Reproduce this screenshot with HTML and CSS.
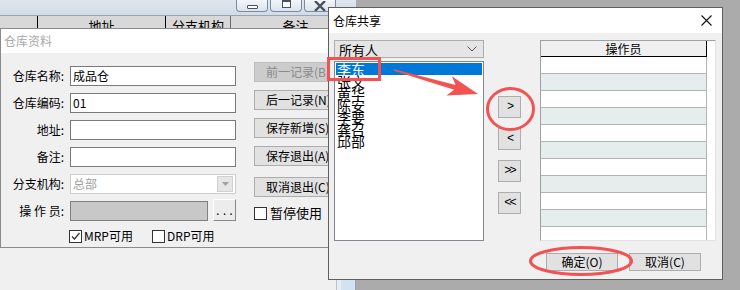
FILE: index.html
```html
<!DOCTYPE html>
<html lang="zh-CN">
<head>
    <meta charset="UTF-8">
    <title>仓库共享</title>
    <link rel="stylesheet" href="styles.css">
</head>
<body>
<div class="desktop">
    <!-- main window behind -->
    <div class="main-window">
        <div class="main-title">
            <span class="win-btn"><i class="ic-min"></i></span>
            <span class="win-btn"><i class="ic-max"></i></span>
            <span class="win-btn">
                <svg width="12" height="10" viewBox="0 0 12 10"><path d="M1 0 L11 10 M11 0 L1 10" stroke="#4a5260" stroke-width="2.4"/></svg>
            </span>
        </div>
        <div class="main-content">
            <div class="main-client">
                <div class="grid-head">
                    <span></span>
                    <span class="gh-cell">地址</span>
                    <span class="gh-cell">分支机构</span>
                    <span class="gh-cell gh-last">备注</span>
                </div>
                <div class="grid-body">
                    <div class="grid-tail">
                        <span></span><span class="gt-dark"></span><span class="gt-dark"></span><span class="gt-light"></span>
                    </div>
                </div>
                <div class="hscroll">
                    <svg width="8" height="9" viewBox="0 0 8 9"><path d="M1.5 0.5 L6 4.5 L1.5 8.5" fill="none" stroke="#606060" stroke-width="2"/></svg>
                </div>
                <div class="toolbar">
                    <span class="tb-check"></span>
                    <span class="tb-text">打印预览</span>
                    <span class="tb-text tb-label">打印</span>
                    <span class="tb-select">标准模式</span>
                </div>
            </div>
            <div class="main-frame"></div>
        </div>
    </div>

    <!-- 仓库资料 -->
    <div class="dlg dlg-info">
        <div class="info-title">仓库资料</div>
        <div class="info-body">
            <div class="form">
                <label class="lbl">仓库名称:</label>
                <div class="input">成品仓</div>
                <label class="lbl">仓库编码:</label>
                <div class="input">01</div>
                <label class="lbl">地址:</label>
                <div class="input"></div>
                <label class="lbl">备注:</label>
                <div class="input"></div>
                <label class="lbl">分支机构:</label>
                <div class="input input-off">
                    <span>总部</span>
                    <span class="drop-btn">
                        <svg width="7" height="4" viewBox="0 0 7 4"><path d="M0 0 H7 L3.5 4 Z" fill="#a0a0a0"/></svg>
                    </span>
                </div>
                <label class="lbl">操 作 员:</label>
                <div class="op-row">
                    <div class="input input-grey"></div>
                    <span class="dots-btn">...</span>
                </div>
                <span></span>
                <div class="check-row">
                    <span class="check-item">
                        <span class="box">
                            <svg width="11" height="11" viewBox="0 0 11 11"><path d="M2 5.5 L4.5 8 L9.5 2" fill="none" stroke="#333" stroke-width="1.2"/></svg>
                        </span>MRP可用
                    </span>
                    <span class="check-item"><span class="box"></span>DRP可用</span>
                </div>
            </div>
            <div class="side">
                <span class="btn btn-off">前一记录(B)</span>
                <span class="btn">后一记录(N)</span>
                <span class="btn">保存新增(S)</span>
                <span class="btn">保存退出(A)</span>
                <span class="btn btn-last">取消退出(C)</span>
                <span class="check-item side-check"><span class="box"></span>暂停使用</span>
            </div>
        </div>
    </div>

    <!-- 仓库共享 -->
    <div class="dlg dlg-share">
        <div class="share-title">
            <span>仓库共享</span>
            <svg class="close-x" width="11" height="11" viewBox="0 0 11 11"><path d="M0.5 0.5 L10.5 10.5 M10.5 0.5 L0.5 10.5" stroke="#111" stroke-width="1.1"/></svg>
        </div>
        <div class="share-body">
            <div class="share-main">
                <div class="left-col">
                    <div class="select">
                        <span>所有人</span>
                        <svg width="10" height="6" viewBox="0 0 10 6"><path d="M0.5 0.5 L5 5 L9.5 0.5" fill="none" stroke="#555" stroke-width="1"/></svg>
                    </div>
                    <ul class="list">
                        <li class="selected">李东</li>
                        <li>张文</li>
                        <li>黄华</li>
                        <li>陈安</li>
                        <li>李要</li>
                        <li>龚召</li>
                        <li>邱部</li>
                    </ul>
                </div>
                <div class="mid-col">
                    <span class="mv-btn">&gt;</span>
                    <span class="mv-btn">&lt;</span>
                    <span class="mv-btn">&gt;&gt;</span>
                    <span class="mv-btn">&lt;&lt;</span>
                </div>
                <div class="right-grid">
                    <div class="grid-table">
                        <div class="gt-head">操作员</div>
                        <div class="gt-row"></div>
                        <div class="gt-row"></div>
                        <div class="gt-row"></div>
                        <div class="gt-row"></div>
                        <div class="gt-row"></div>
                        <div class="gt-row"></div>
                        <div class="gt-row"></div>
                        <div class="gt-row"></div>
                        <div class="gt-row"></div>
                        <div class="gt-row"></div>
                        <div class="gt-row"></div>
                    </div>
                </div>
            </div>
            <div class="share-foot">
                <span class="btn btn-foot">确定(O)</span>
                <span class="btn btn-foot">取消(C)</span>
            </div>
        </div>
    </div>

    <!-- red annotations -->
    <svg class="marks" width="740" height="290" viewBox="0 0 740 290">
        <rect x="328.5" y="58.5" width="51" height="21" fill="none" stroke="#f25252" stroke-width="3"/>
        <polygon points="394.2,69.2 455.6,85 451.9,76.2 478,94 446.4,95.4 454.2,89.8 393.8,70.8" fill="#f25252"/>
        <ellipse cx="510.5" cy="109" rx="23" ry="20.5" fill="none" stroke="#f25252" stroke-width="3"/>
        <ellipse cx="581" cy="261" rx="50.5" ry="13.5" fill="none" stroke="#f25252" stroke-width="3"/>
    </svg>
</div>
</body>
</html>
```

FILE: styles.css
```css
* {
    box-sizing: border-box;
}
body {
    margin: 0;
    width: 740px;
    height: 290px;
    overflow: hidden;
    background: #ababab;
    font-family: "Noto Sans CJK SC", "Liberation Sans", sans-serif;
    font-size: 12px;
    color: #000;
}
.desktop {
    position: relative;
    width: 740px;
    height: 290px;
}

/* main window */
.main-window {
    position: absolute;
    left: 0;
    top: 0;
    width: 356px;
    height: 290px;
    display: flex;
    flex-direction: column;
    background: #f0f0f0;
}
.main-title {
    height: 16px;
    flex: none;
    display: flex;
    justify-content: flex-end;
    gap: 2px;
    padding-right: 20px;
    background: linear-gradient(#dfe6ef, #d2dbe6);
    border-bottom: 1px solid #9aa5b3;
}
.win-btn {
    width: 32px;
    height: 12px;
    display: flex;
    align-items: center;
    justify-content: center;
    border: 1px solid #7c8ba0;
    border-top: none;
    border-radius: 0 0 4px 4px;
    background: linear-gradient(#f3f6fa, #dbe3ed);
    overflow: hidden;
}
.ic-min {
    width: 11px;
    height: 4px;
    border: 1px solid #4a5260;
    border-radius: 1px;
    background: #fff;
    margin-top: 2px;
}
.ic-max {
    width: 9px;
    height: 8px;
    border: 1px solid #4a5260;
    border-top-width: 2px;
    background: #fff;
    margin-top: -3px;
}
.main-content {
    flex: 1;
    display: flex;
}
.main-client {
    width: 336px;
    display: flex;
    flex-direction: column;
}
.main-frame {
    flex: 1;
    background: #d4e1ef;
    border-left: 1px solid #b9c3cf;
    border-right: 1px solid #95a6ba;
    box-shadow: inset 4px 0 0 #e6edf5;
}
.grid-head {
    height: 12px;
    flex: none;
    display: grid;
    grid-template-columns: 37px 128px 65px 1fr;
    background: #d8d8d8;
    overflow: hidden;
    font-size: 13px;
    line-height: 16px;
}
.gh-cell {
    border-left: 1px solid #000;
    text-align: center;
    padding-top: 2px;
}
.gh-last {
    border-left-color: #6a6a6a;
    padding-left: 24px;
}
.grid-body {
    flex: 1;
    display: flex;
    flex-direction: column;
    justify-content: flex-end;
    background: #fff;
}
.grid-tail {
    height: 10px;
    display: grid;
    grid-template-columns: 37px 128px 65px 1fr;
    background: linear-gradient(#c8c8c8 0 1px, #fff 1px 5px, #d4dada 5px 6px, #fff 6px 7px, #b8b8b8 7px 8px, #fff 8px 9px, #9c9c9c 9px 10px);
    margin-right: 10px;
}
.gt-dark {
    border-left: 1px solid #000;
}
.gt-light {
    border-left: 1px solid #c4c4c4;
}
.hscroll {
    height: 18px;
    flex: none;
    display: flex;
    align-items: center;
    justify-content: flex-end;
    padding-right: 22px;
    padding-top: 1px;
}
.toolbar {
    flex: 1;
    display: flex;
    align-items: flex-start;
    border-top: 1px solid #a0a0a0;
    padding-top: 8px;
    font-size: 12px;
    line-height: 14px;
}
.tb-check {
    width: 13px;
    height: 13px;
    border: 1px solid #333;
    background: #fff;
    margin-left: 85px;
}
.tb-text {
    margin-left: 5px;
}
.tb-label {
    margin-left: 28px;
}
.tb-select {
    width: 110px;
    height: 16px;
    margin-left: 22px;
    margin-top: -2px;
    border: 1px solid #7a7a7a;
    background: #fff;
    padding-left: 3px;
}

/* dialogs */
.dlg {
    position: absolute;
    overflow: hidden;
}
.dlg-info {
    left: 0;
    top: 28px;
    width: 345px;
    height: 220px;
    border: 1px solid #8a8a8a;
    background: #f0f0f0;
}
.info-title {
    height: 24px;
    background: #fff;
    color: #a8a8a8;
    padding-left: 3px;
    line-height: 24px;
    font-size: 12px;
}
.info-body {
    display: flex;
    padding-top: 13px;
}
.form {
    display: grid;
    grid-template-columns: 63px 166px;
    grid-auto-rows: 20px;
    column-gap: 6px;
    row-gap: 7px;
}
.lbl {
    text-align: right;
    line-height: 20px;
    white-space: pre;
}
.input {
    height: 20px;
    border: 1px solid #7a7a7a;
    background: #fff;
    padding: 0 2px;
    line-height: 18px;
}
.input-off {
    display: flex;
    justify-content: space-between;
    align-items: center;
    border-color: #cdcdcd;
    color: #a0a0a0;
    padding-right: 2px;
}
.drop-btn {
    width: 16px;
    height: 16px;
    display: flex;
    align-items: center;
    justify-content: center;
    background: #e6e6e6;
    border: 1px solid #d0d0d0;
}
.op-row {
    display: flex;
    gap: 5px;
}
.input-grey {
    width: 138px;
    background: #c8c8c8;
    border-color: #808080;
}
.dots-btn {
    width: 23px;
    height: 22px;
    margin-top: -2px;
    border: 1px solid;
    border-color: #fff #888 #888 #fff;
    background: #ececec;
    text-align: center;
    line-height: 24px;
    font-family: "Liberation Mono", monospace;
    font-size: 11px;
}
.check-row {
    display: flex;
    padding-top: 1px;
}
.check-item {
    width: 100px;
    display: flex;
    align-items: center;
    gap: 2px;
    line-height: 14px;
    height: 14px;
    margin-left: -1px;
}
.box {
    width: 13px;
    height: 13px;
    flex: none;
    border: 1px solid #333;
    background: #fff;
    display: flex;
    align-items: center;
    justify-content: center;
}
.side {
    display: flex;
    flex-direction: column;
    gap: 8px;
    margin-left: 18px;
    margin-top: -4px;
}
.btn {
    width: 80px;
    height: 20px;
    border: 1px solid #adadad;
    background: #e1e1e1;
    padding-left: 11px;
    line-height: 18px;
    white-space: nowrap;
}
.btn-off {
    background: #cccccc;
    border-color: #bdbdbd;
    color: #8a8a8a;
}
.btn-last {
    margin-top: 3px;
}
.side-check {
    margin-left: 0;
    margin-top: 1px;
    gap: 3px;
    font-size: 13px;
}

/* 仓库共享 */
.dlg-share {
    left: 328px;
    top: 7px;
    width: 395px;
    height: 273px;
    border: 1px solid #5f5f5f;
    background: #f0f0f0;
}
.share-title {
    height: 25px;
    background: #fff;
    display: flex;
    justify-content: space-between;
    align-items: center;
    padding: 0 10px 0 4px;
    font-size: 12px;
}
.share-body {
    padding: 7px 6px 0 5px;
}
.share-main {
    display: flex;
    height: 201px;
}
.left-col {
    width: 150px;
    display: flex;
    flex-direction: column;
    gap: 3px;
}
.select {
    height: 18px;
    flex: none;
    display: flex;
    justify-content: space-between;
    align-items: center;
    padding: 0 6px 0 4px;
    border: 1px solid #adadad;
    background: #e5e5e5;
    font-size: 13px;
}
.list {
    flex: 1;
    margin: 0;
    padding: 1px;
    list-style: none;
    border: 1px solid #828790;
    background: #fff;
    font-size: 14px;
    line-height: 12px;
}
.list li {
    height: 12px;
    padding-left: 1px;
}
.list .selected {
    background: #0078d7;
    color: #fff;
}
.mid-col {
    width: 23px;
    margin-left: 14px;
    padding-top: 56px;
    display: flex;
    flex-direction: column;
    gap: 10px;
}
.mv-btn {
    height: 22px;
    border: 1px solid #adadad;
    background: #e1e1e1;
    text-align: center;
    line-height: 20px;
    font-family: "Liberation Mono", monospace;
    font-size: 12px;
    letter-spacing: -2px;
}
.right-grid {
    width: 176px;
    margin-left: 19px;
    border: 1px solid;
    border-color: #a0a0a0 #e3e3e3 #e3e3e3 #a0a0a0;
    background: #fff;
    overflow: hidden;
}
.grid-table {
    width: 166px;
}
.gt-head {
    height: 16px;
    background: #f0f0f0;
    border-right: 1px solid #000;
    border-bottom: 1px solid #000;
    text-align: center;
    line-height: 15px;
    font-size: 12px;
}
.gt-row {
    height: 17px;
    border-right: 1px solid #b4b4b4;
    border-bottom: 1px solid #b4b4b4;
}
.gt-row:nth-child(odd) {
    background: #e5eeec;
}
.share-foot {
    display: flex;
    justify-content: flex-end;
    gap: 11px;
    margin-top: 12px;
    padding-right: 15px;
}
.btn-foot {
    width: 72px;
    height: 18px;
    padding-left: 0;
    text-align: center;
    line-height: 16px;
}

.marks {
    position: absolute;
    left: 0;
    top: 0;
    pointer-events: none;
}
```
